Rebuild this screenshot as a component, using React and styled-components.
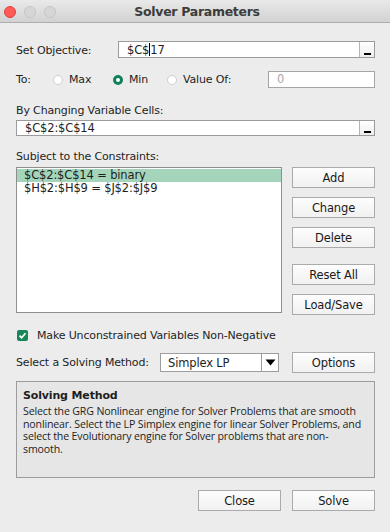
import React from "react";
import styled, { createGlobalStyle } from "styled-components";

const Global = createGlobalStyle`
  html, body { margin: 0; padding: 0; background: #ececec; }
  * { box-sizing: border-box; }
`;

const Window = styled.div`
  width: 390px;
  height: 532px;
  background: #ececec;
  font-family: "DejaVu Sans", "Liberation Sans", sans-serif;
  font-size: 11px;
  letter-spacing: -0.15px;
  color: #1e1e1e;
  position: relative;
  overflow: hidden;
`;

const TopStrip = styled.div`
  position: absolute;
  top: 0;
  left: 343px;
  width: 45px;
  height: 2px;
  background: #1a6fa8;
`;

const TitleBar = styled.div`
  height: 23px;
  background: linear-gradient(#e9e9e9, #d2d2d2);
  border-bottom: 1px solid #adadad;
  display: flex;
  align-items: center;
  position: relative;
`;

const Lights = styled.div`
  display: flex;
  gap: 8px;
  padding-left: 4px;
  position: absolute;
  left: 0;
  top: 6px;
`;

const Light = styled.span`
  width: 12px;
  height: 12px;
  border-radius: 50%;
  background: ${(p) => (p.$red ? "#fd5b55" : "#d6d6d6")};
  border: 1px solid ${(p) => (p.$red ? "#e2443e" : "#c6c6c6")};
`;

const Title = styled.div`
  flex: 1;
  text-align: center;
  font-weight: bold;
  font-size: 12.5px;
  letter-spacing: -0.3px;
  color: #3c3c3c;
  padding-top: 1px;
  padding-left: 4px;
`;

const Body = styled.div`
  padding: 0 15px 0 16px;
  display: flex;
  flex-direction: column;
`;

const Row = styled.div`
  display: flex;
  align-items: center;
  margin-top: ${(p) => p.$mt || 0}px;
`;

const Label = styled.div`
  width: ${(p) => (p.$w ? p.$w + "px" : "auto")};
  flex-shrink: 0;
  white-space: nowrap;
  margin-top: ${(p) => p.$mt || 0}px;
`;

const RefInput = styled.div`
  flex: 1;
  height: 17px;
  background: #fff;
  border: 1px solid #9b9b9b;
  display: flex;
  align-items: stretch;
  margin-top: ${(p) => p.$mt || 0}px;
`;

const RefText = styled.div`
  flex: 1;
  padding-left: 8px;
  font-size: 11.5px;
  display: flex;
  align-items: center;
`;

const Caret = styled.span`
  display: inline-block;
  width: 1px;
  height: 13px;
  background: #000;
`;

const RefBtn = styled.div`
  width: 15px;
  border-left: 1px solid #b5b5b5;
  background: linear-gradient(#ffffff, #ededed);
  position: relative;
  &::after {
    content: "";
    position: absolute;
    left: 4px;
    bottom: 2px;
    width: 7px;
    height: 2px;
    background: #000;
  }
`;

const RadioItem = styled.label`
  display: flex;
  align-items: center;
  gap: 6px;
  width: ${(p) => (p.$w ? p.$w + "px" : "auto")};
  flex-shrink: 0;
`;

const Radio = styled.span`
  width: 10px;
  height: 10px;
  border-radius: 50%;
  background: #fff;
  border: ${(p) => (p.$on ? "3px solid #10825a" : "1px solid #cfcfcf")};
`;

const ValueBox = styled.div`
  width: 107px;
  height: 17px;
  margin-left: auto;
  background: #fff;
  border: 1px solid #a5a5a5;
  color: #a8a8a8;
  padding-left: 8px;
  line-height: 15px;
  font-size: 11.5px;
`;

const ConstraintArea = styled.div`
  display: flex;
  margin-top: 4px;
  gap: 10px;
`;

const List = styled.div`
  width: 266px;
  height: 146px;
  background: #fff;
  border: 1px solid #8f8f8f;
  padding-top: 1px;
`;

const ListItem = styled.div`
  height: 13px;
  line-height: 13px;
  padding-left: 7px;
  font-size: 11.5px;
  background: ${(p) => (p.$sel ? "#a4d5bb" : "transparent")};
`;

const ButtonCol = styled.div`
  display: flex;
  flex-direction: column;
  width: 83px;
`;

const Button = styled.div`
  width: 83px;
  height: 21px;
  border: 1px solid #aaaaaa;
  background: linear-gradient(#fdfdfd, #f1f1f1);
  display: flex;
  align-items: center;
  justify-content: center;
  font-size: 11.5px;
  color: #1a1a1a;
  flex-shrink: 0;
  margin-top: ${(p) => p.$mt || 0}px;
  margin-left: ${(p) => p.$ml || 0}px;
`;

const Check = styled.span`
  width: 11px;
  height: 11px;
  border-radius: 2px;
  background: #17875a;
  display: flex;
  align-items: center;
  justify-content: center;
  margin-left: 1px;
  margin-right: 9px;
`;

const Select = styled.div`
  width: 119px;
  height: 19px;
  margin-left: auto;
  background: #fff;
  border: 1px solid #9d9d9d;
  display: flex;
  align-items: stretch;
`;

const SelectText = styled.div`
  flex: 1;
  padding-left: 7px;
  display: flex;
  align-items: center;
  font-size: 11.5px;
`;

const SelectArrow = styled.div`
  width: 17px;
  border-left: 1px solid #9d9d9d;
  display: flex;
  align-items: center;
  justify-content: center;
`;

const InfoBox = styled.div`
  margin-top: 8px;
  height: 97px;
  border: 1px solid #9c9c9c;
  background: #e6e6e6;
  padding: 7px 6px 0 6px;
`;

const InfoTitle = styled.div`
  font-weight: bold;
  font-size: 11px;
  margin-bottom: 3px;
`;

const InfoText = styled.div`
  font-family: "Open Sans", sans-serif;
  font-size: 10.6px;
  line-height: 12.5px;
  letter-spacing: -0.15px;
`;

const Footer = styled.div`
  display: flex;
  justify-content: flex-end;
  gap: 11px;
  margin-top: 12px;
`;

export default function App() {
  return (
    <>
      <Global />
      <Window>
        <TopStrip />
        <TitleBar>
          <Lights>
            <Light $red />
            <Light />
            <Light />
          </Lights>
          <Title>Solver Parameters</Title>
        </TitleBar>
        <Body>
          <Row $mt={18}>
            <Label $w={102} $mt={1}>Set Objective:</Label>
            <RefInput>
              <RefText>
                $C$<Caret />17
              </RefText>
              <RefBtn />
            </RefInput>
          </Row>
          <Row $mt={13}>
            <Label $w={37}>To:</Label>
            <RadioItem $w={60}>
              <Radio />
              Max
            </RadioItem>
            <RadioItem $w={54}>
              <Radio $on />
              Min
            </RadioItem>
            <RadioItem>
              <Radio />
              Value Of:
            </RadioItem>
            <ValueBox>0</ValueBox>
          </Row>
          <Label $mt={16}>By Changing Variable Cells:</Label>
          <RefInput $mt={3}>
            <RefText>$C$2:$C$14</RefText>
            <RefBtn />
          </RefInput>
          <Label $mt={14}>Subject to the Constraints:</Label>
          <ConstraintArea>
            <List>
              <ListItem $sel>$C$2:$C$14 = binary</ListItem>
              <ListItem>$H$2:$H$9 = $J$2:$J$9</ListItem>
            </List>
            <ButtonCol>
              <Button>Add</Button>
              <Button $mt={9}>Change</Button>
              <Button $mt={9}>Delete</Button>
              <Button $mt={16}>Reset All</Button>
              <Button $mt={9}>Load/Save</Button>
            </ButtonCol>
          </ConstraintArea>
          <Row $mt={14}>
            <Check>
              <svg width="9" height="9" viewBox="0 0 9 9">
                <path d="M1.5 4.6 L3.6 6.7 L7.5 2.2" fill="none" stroke="#fff" strokeWidth="1.7" />
              </svg>
            </Check>
            Make Unconstrained Variables Non-Negative
          </Row>
          <Row $mt={10}>
            <Label>Select a Solving Method:</Label>
            <Select>
              <SelectText>Simplex LP</SelectText>
              <SelectArrow>
                <svg width="11" height="7" viewBox="0 0 11 7">
                  <path d="M0.5 0.5 H10.5 L5.5 6.5 Z" fill="#000" />
                </svg>
              </SelectArrow>
            </Select>
            <Button $ml={13}>Options</Button>
          </Row>
          <InfoBox>
            <InfoTitle>Solving Method</InfoTitle>
            <InfoText>
              Select the GRG Nonlinear engine for Solver Problems that are smooth nonlinear. Select the LP Simplex engine for linear Solver Problems, and select the Evolutionary engine for Solver problems that are non-smooth.
            </InfoText>
          </InfoBox>
          <Footer>
            <Button>Close</Button>
            <Button>Solve</Button>
          </Footer>
        </Body>
      </Window>
    </>
  );
}
